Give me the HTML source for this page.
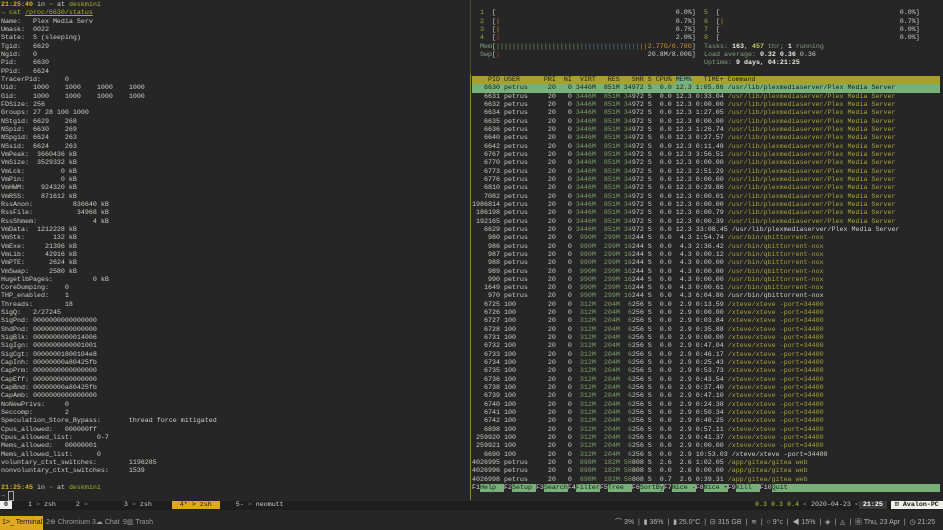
<!DOCTYPE html>
<html><head><meta charset="utf-8"><style>
*{margin:0;padding:0;box-sizing:border-box}
body{width:943px;height:530px;background:#262626;overflow:hidden;position:relative;font-family:"Liberation Mono",monospace;font-size:6.67px;color:#cdcdc5}
pre{font-family:"Liberation Mono",monospace;font-size:6.67px;line-height:8.333px;tab-size:8;position:absolute;white-space:pre}
em{font-style:normal;color:#7ea06a}
i{font-style:normal;color:#a8a236}
b{font-weight:bold;color:#e8e8e0}
.y{color:#d8b020;font-weight:bold}
.gy{color:#a8b030}
.n{color:#a0a040}
.r{color:#c04040}
.bl{color:#4a8aa8}
.o{color:#d09030}
.lb{color:#7fa080}
.sel{background:#78b07a;color:#1c1c1c;display:inline-block;width:468px}
.sel i,.sel em,.sel b{color:#1c1c1c}
.hdr{background:#a8a028;color:#1c1c1c;display:inline-block;width:468px}
.mh{background:#78b080}
.fk{background:#78b07a;color:#1c1c1c}
.tb span{white-space:nowrap}
</style></head><body>
<div style="position:absolute;left:470px;top:0;width:1px;height:500px;background:#4a4a3a"></div>
<div style="position:absolute;left:470px;top:74px;width:1px;height:426px;background:#8a8a30"></div>
<pre style="left:1px;top:1px"><span class="y">21:25:40</span> in <span class="gy">~</span> at <span class="gy">deskmini</span>
<span class="gy">→ cat <u>/proc/6630/status</u></span>
Name:	Plex Media Serv
Umask:	0022
State:	S (sleeping)
Tgid:	6629
Ngid:	0
Pid:	6630
PPid:	6624
TracerPid:	0
Uid:	1000	1000	1000	1000
Gid:	1000	1000	1000	1000
FDSize:	256
Groups:	27 28 100 1000
NStgid:	6629	268
NSpid:	6630	269
NSpgid:	6624	263
NSsid:	6624	263
VmPeak:	 3660436 kB
VmSize:	 3529332 kB
VmLck:	       0 kB
VmPin:	       0 kB
VmHWM:	  924320 kB
VmRSS:	  871612 kB
RssAnon:	  836640 kB
RssFile:	   34968 kB
RssShmem:	       4 kB
VmData:	 1212228 kB
VmStk:	     132 kB
VmExe:	   21396 kB
VmLib:	   42916 kB
VmPTE:	    2624 kB
VmSwap:	    2580 kB
HugetlbPages:	       0 kB
CoreDumping:	0
THP_enabled:	1
Threads:	18
SigQ:	2/27245
SigPnd:	0000000000000000
ShdPnd:	0000000000000000
SigBlk:	0000000000014006
SigIgn:	0000000000001001
SigCgt:	00000001800104e8
CapInh:	00000000a80425fb
CapPrm:	0000000000000000
CapEff:	0000000000000000
CapBnd:	00000000a80425fb
CapAmb:	0000000000000000
NoNewPrivs:	0
Seccomp:	2
Speculation_Store_Bypass:	thread force mitigated
Cpus_allowed:	000000ff
Cpus_allowed_list:	0-7
Mems_allowed:	00000001
Mems_allowed_list:	0
voluntary_ctxt_switches:	1196285
nonvoluntary_ctxt_switches:	1539

<span class="y">21:25:45</span> in <span class="gy">~</span> at <span class="gy">deskmini</span>
<span class="gy">→</span> <span style="outline:1px solid #aaa"> </span></pre>
<pre style="left:472px;top:9.33px">  <span class="n">1</span>  [                                             0.0%]
  <span class="n">2</span>  [<span class="o">|</span>                                            0.7%]
  <span class="n">3</span>  [<span class="o">|</span>                                            0.7%]
  <span class="n">4</span>  [<span class="r">|</span>                                            2.0%]
  <span class="lb">Mem</span>[<em>|||||||||||||||||||||</em><span class="bl">|||||||||||||||</span><span class="o">||2.77G/6.78G</span>]
  <span class="lb">Swp</span>[<span class="r">|</span>                                     20.8M/8.00G]


<span class="hdr">    PID USER      PRI  NI  VIRT   RES   SHR S CPU% <span class="mh">MEM%</span>   TIME+ Command</span>
<span class="sel">   6630 petrus     20   0 3446M  851M 34972 S  0.0 12.3 1:05.86 /usr/lib/plexmediaserver/Plex Media Server</span>
   6631 petrus     20   0 <em>3446M</em>  <em>851M</em> <em>34</em>972 S  0.0 12.3 0:33.04 <i>/usr/lib/plexmediaserver/Plex Media Server</i>
   6632 petrus     20   0 <em>3446M</em>  <em>851M</em> <em>34</em>972 S  0.0 12.3 0:00.00 <i>/usr/lib/plexmediaserver/Plex Media Server</i>
   6634 petrus     20   0 <em>3446M</em>  <em>851M</em> <em>34</em>972 S  0.0 12.3 1:27.05 <i>/usr/lib/plexmediaserver/Plex Media Server</i>
   6635 petrus     20   0 <em>3446M</em>  <em>851M</em> <em>34</em>972 S  0.0 12.3 0:00.00 <i>/usr/lib/plexmediaserver/Plex Media Server</i>
   6636 petrus     20   0 <em>3446M</em>  <em>851M</em> <em>34</em>972 S  0.0 12.3 1:26.74 <i>/usr/lib/plexmediaserver/Plex Media Server</i>
   6640 petrus     20   0 <em>3446M</em>  <em>851M</em> <em>34</em>972 S  0.0 12.3 0:27.57 <i>/usr/lib/plexmediaserver/Plex Media Server</i>
   6642 petrus     20   0 <em>3446M</em>  <em>851M</em> <em>34</em>972 S  0.0 12.3 0:11.48 <i>/usr/lib/plexmediaserver/Plex Media Server</i>
   6767 petrus     20   0 <em>3446M</em>  <em>851M</em> <em>34</em>972 S  0.0 12.3 3:56.51 <i>/usr/lib/plexmediaserver/Plex Media Server</i>
   6770 petrus     20   0 <em>3446M</em>  <em>851M</em> <em>34</em>972 S  0.0 12.3 0:00.00 <i>/usr/lib/plexmediaserver/Plex Media Server</i>
   6773 petrus     20   0 <em>3446M</em>  <em>851M</em> <em>34</em>972 S  0.0 12.3 2:51.29 <i>/usr/lib/plexmediaserver/Plex Media Server</i>
   6776 petrus     20   0 <em>3446M</em>  <em>851M</em> <em>34</em>972 S  0.0 12.3 0:00.00 <i>/usr/lib/plexmediaserver/Plex Media Server</i>
   6810 petrus     20   0 <em>3446M</em>  <em>851M</em> <em>34</em>972 S  0.0 12.3 0:29.86 <i>/usr/lib/plexmediaserver/Plex Media Server</i>
   7082 petrus     20   0 <em>3446M</em>  <em>851M</em> <em>34</em>972 S  0.0 12.3 0:00.01 <i>/usr/lib/plexmediaserver/Plex Media Server</i>
1986814 petrus     20   0 <em>3446M</em>  <em>851M</em> <em>34</em>972 S  0.0 12.3 0:00.00 <i>/usr/lib/plexmediaserver/Plex Media Server</i>
 186198 petrus     20   0 <em>3446M</em>  <em>851M</em> <em>34</em>972 S  0.0 12.3 0:00.79 <i>/usr/lib/plexmediaserver/Plex Media Server</i>
 192165 petrus     20   0 <em>3446M</em>  <em>851M</em> <em>34</em>972 S  0.0 12.3 0:00.39 <i>/usr/lib/plexmediaserver/Plex Media Server</i>
   6629 petrus     20   0 <em>3446M</em>  <em>851M</em> <em>34</em>972 S  0.0 12.3 33:08.45 /usr/lib/plexmediaserver/Plex Media Server
    980 petrus     20   0  <em>990M</em>  <em>299M</em> <em>16</em>244 S  0.0  4.3 1:54.74 <i>/usr/bin/qbittorrent-nox</i>
    986 petrus     20   0  <em>990M</em>  <em>299M</em> <em>16</em>244 S  0.0  4.3 2:36.42 <i>/usr/bin/qbittorrent-nox</i>
    987 petrus     20   0  <em>990M</em>  <em>299M</em> <em>16</em>244 S  0.0  4.3 0:00.12 <i>/usr/bin/qbittorrent-nox</i>
    988 petrus     20   0  <em>990M</em>  <em>299M</em> <em>16</em>244 S  0.0  4.3 0:00.00 <i>/usr/bin/qbittorrent-nox</i>
    989 petrus     20   0  <em>990M</em>  <em>299M</em> <em>16</em>244 S  0.0  4.3 0:00.00 <i>/usr/bin/qbittorrent-nox</i>
    990 petrus     20   0  <em>990M</em>  <em>299M</em> <em>16</em>244 S  0.0  4.3 0:00.00 <i>/usr/bin/qbittorrent-nox</i>
   1649 petrus     20   0  <em>990M</em>  <em>299M</em> <em>16</em>244 S  0.0  4.3 0:00.61 <i>/usr/bin/qbittorrent-nox</i>
    970 petrus     20   0  <em>990M</em>  <em>299M</em> <em>16</em>244 S  0.0  4.3 6:04.86 /usr/bin/qbittorrent-nox
   6725 100        20   0  <em>312M</em>  <em>204M</em>  <em>6</em>256 S  0.0  2.9 0:13.59 <i>/xteve/xteve -port=34400</i>
   6726 100        20   0  <em>312M</em>  <em>204M</em>  <em>6</em>256 S  0.0  2.9 0:00.00 <i>/xteve/xteve -port=34400</i>
   6727 100        20   0  <em>312M</em>  <em>204M</em>  <em>6</em>256 S  0.0  2.9 0:03.84 <i>/xteve/xteve -port=34400</i>
   6728 100        20   0  <em>312M</em>  <em>204M</em>  <em>6</em>256 S  0.0  2.9 0:35.88 <i>/xteve/xteve -port=34400</i>
   6731 100        20   0  <em>312M</em>  <em>204M</em>  <em>6</em>256 S  0.0  2.9 0:00.00 <i>/xteve/xteve -port=34400</i>
   6732 100        20   0  <em>312M</em>  <em>204M</em>  <em>6</em>256 S  0.0  2.9 0:47.04 <i>/xteve/xteve -port=34400</i>
   6733 100        20   0  <em>312M</em>  <em>204M</em>  <em>6</em>256 S  0.0  2.9 0:46.17 <i>/xteve/xteve -port=34400</i>
   6734 100        20   0  <em>312M</em>  <em>204M</em>  <em>6</em>256 S  0.0  2.9 0:25.43 <i>/xteve/xteve -port=34400</i>
   6735 100        20   0  <em>312M</em>  <em>204M</em>  <em>6</em>256 S  0.0  2.9 0:53.73 <i>/xteve/xteve -port=34400</i>
   6736 100        20   0  <em>312M</em>  <em>204M</em>  <em>6</em>256 S  0.0  2.9 0:43.54 <i>/xteve/xteve -port=34400</i>
   6738 100        20   0  <em>312M</em>  <em>204M</em>  <em>6</em>256 S  0.0  2.9 0:37.40 <i>/xteve/xteve -port=34400</i>
   6739 100        20   0  <em>312M</em>  <em>204M</em>  <em>6</em>256 S  0.0  2.9 0:47.10 <i>/xteve/xteve -port=34400</i>
   6740 100        20   0  <em>312M</em>  <em>204M</em>  <em>6</em>256 S  0.0  2.9 0:24.38 <i>/xteve/xteve -port=34400</i>
   6741 100        20   0  <em>312M</em>  <em>204M</em>  <em>6</em>256 S  0.0  2.9 0:50.34 <i>/xteve/xteve -port=34400</i>
   6742 100        20   0  <em>312M</em>  <em>204M</em>  <em>6</em>256 S  0.0  2.9 0:40.25 <i>/xteve/xteve -port=34400</i>
   6898 100        20   0  <em>312M</em>  <em>204M</em>  <em>6</em>256 S  0.0  2.9 0:57.11 <i>/xteve/xteve -port=34400</i>
 259920 100        20   0  <em>312M</em>  <em>204M</em>  <em>6</em>256 S  0.0  2.9 0:41.37 <i>/xteve/xteve -port=34400</i>
 259921 100        20   0  <em>312M</em>  <em>204M</em>  <em>6</em>256 S  0.0  2.9 0:00.00 <i>/xteve/xteve -port=34400</i>
   6690 100        20   0  <em>312M</em>  <em>204M</em>  <em>6</em>256 S  0.0  2.9 10:53.03 /xteve/xteve -port=34400
4026995 petrus     20   0  <em>898M</em>  <em>182M</em> <em>58</em>808 S  2.6  2.6 1:02.05 <i>/app/gitea/gitea web</i>
4026996 petrus     20   0  <em>898M</em>  <em>182M</em> <em>58</em>808 S  0.0  2.6 0:00.00 <i>/app/gitea/gitea web</i>
4026998 petrus     20   0  <em>898M</em>  <em>182M</em> <em>58</em>808 S  0.7  2.6 0:39.31 <i>/app/gitea/gitea web</i>
<span class="fk" style="display:inline-block;width:468px"><span style="background:#262626;color:#ddd">F1</span>Help  <span style="background:#262626;color:#ddd">F2</span>Setup <span style="background:#262626;color:#ddd">F3</span>Search<span style="background:#262626;color:#ddd">F4</span>Filter<span style="background:#262626;color:#ddd">F5</span>Tree  <span style="background:#262626;color:#ddd">F6</span>SortBy<span style="background:#262626;color:#ddd">F7</span>Nice -<span style="background:#262626;color:#ddd">F8</span>Nice +<span style="background:#262626;color:#ddd">F9</span>Kill  <span style="background:#262626;color:#ddd">F10</span>Quit</span></pre>
<pre style="left:696px;top:9.33px">  <span class="n">5</span>  [                                             0.0%]
  <span class="n">6</span>  [<span class="o">|</span>                                            0.7%]
  <span class="n">7</span>  [                                             0.0%]
  <span class="n">8</span>  [                                             0.0%]
  <span class="lb">Tasks:</span> <b>163</b>, <b style="color:#c8c860">457</b> <span class="lb">thr;</span> <b>1</b> <span class="lb">running</span>
  <span class="lb">Load average:</span> <b>0.32</b> <b>0.36</b> 0.36
  <span class="lb">Uptime:</span> <b>9 days, 04:21:25</b></pre>
<!-- tmux status -->
<div style="position:absolute;left:0;top:501px;width:943px;height:9px;background:#1e1e1e"></div>
<pre style="left:0;top:501px;line-height:9px"><span style="background:#eee;color:#111;font-weight:bold"> 0 </span>    1 <span style="color:#777">&gt;</span> zsh     2 <span style="color:#777">&gt;</span>         3 <span style="color:#777">&gt;</span> zsh     <span style="background:#e0a820;color:#1a1a1a">  4* &gt; zsh  </span>    5- <span style="color:#777">&gt;</span> neomutt</pre>
<pre style="left:755px;top:501px;line-height:9px"><span style="color:#8a9a30;font-weight:bold">0.3 0.3 0.4</span> <span style="color:#888">&lt;</span> 2020-04-23 <span style="color:#888">&lt;</span><span style="background:#3a3a3a;color:#fff;font-weight:bold"> 21:25 </span> <span style="background:#f0f0e8;color:#111;font-weight:bold"> ⊡ Avalon-PC </span></pre>
<!-- taskbar -->
<div class="tb" style="position:absolute;left:0;top:514px;width:943px;height:16px;background:#262626;font-family:'Liberation Sans',sans-serif;font-size:7px;color:#9a9a9a">
<span style="position:absolute;left:0;top:2px;height:14px;width:43px;background:#e0a820;color:#1a1a1a;line-height:14px;padding-left:2px">1&gt;_ Terminal</span>
<span style="position:absolute;left:46px;top:2px;line-height:14px">2⊕ Chromium</span>
<span style="position:absolute;left:92px;top:2px;line-height:14px">3☁ Chat</span>
<span style="position:absolute;left:123px;top:2px;line-height:14px">9▥ Trash</span>
<span style="position:absolute;left:615px;top:2px;line-height:14px;white-space:pre;color:#b0b0b0">⌒ 3%  |  ▮ 36%  |  ▮ 25.0°C  |  ⊟ 315 GB  |  ≋  |  ○ 9°c  |  ◀ 15%  |  ◈  |  ◬  |  ▦ Thu, 23 Apr  |  ◷ 21:25</span>
</div>
</body></html>
